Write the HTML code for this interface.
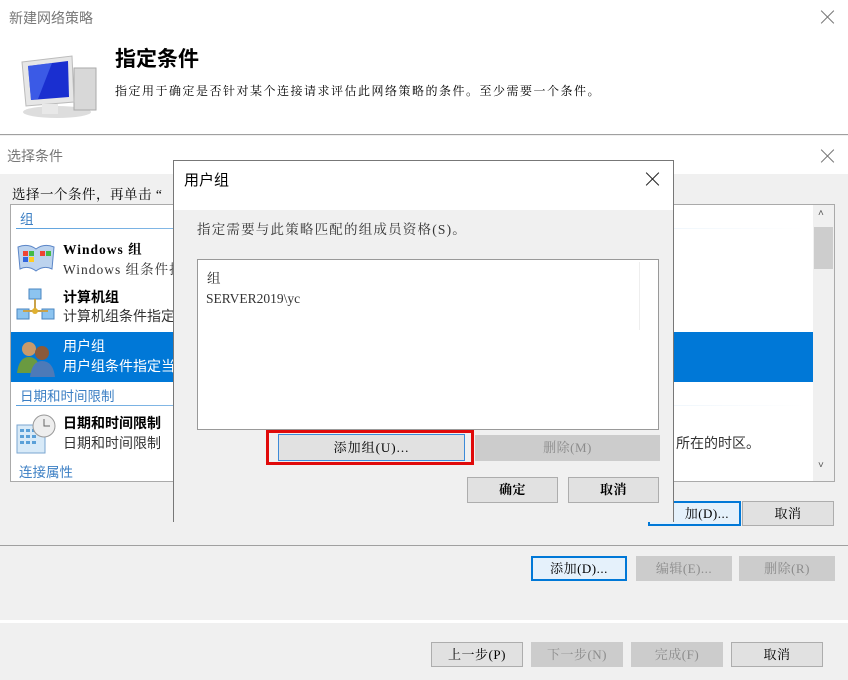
<!DOCTYPE html>
<html><head><meta charset="utf-8"><style>
*{margin:0;padding:0;box-sizing:border-box}
body{width:848px;height:680px;overflow:hidden;background:#f0f0f0;position:relative;font-family:"Liberation Sans","Noto Sans CJK SC",sans-serif;font-size:13px;color:#000}
.a{position:absolute}
.s{font-family:"Liberation Serif","Noto Serif CJK SC",serif}
.btn{position:absolute;background:#e1e1e1;border:1px solid #adadad;text-align:center;font-family:"Liberation Serif","Noto Serif CJK SC",serif;font-size:13px;color:#000;letter-spacing:.5px}
.dis{background:#cccccc;border-color:#cccccc;color:#8c8c8c}
.def{border:2px solid #0078d7;background:#e5f1fb}
.x{position:absolute;width:14px;height:14px}
.x:before,.x:after{content:"";position:absolute;left:6px;top:-2px;width:1px;height:18px;background:#777;transform:rotate(45deg)}
.x:after{transform:rotate(-45deg)}
.x.d:before,.x.d:after{background:#222}
</style></head><body>
<div class="a" style="left:0;top:0;width:848px;height:135px;background:#fff;border-bottom:1px solid #a0a0a0"></div>
<div class="a" style="left:9px;top:8px;font-size:14px;color:#777">新建网络策略</div>
<div class="x" style="left:821px;top:10px"></div>
<div class="a" style="left:115px;top:43px;font-size:21px;font-weight:bold">指定条件</div>
<div class="a s" style="left:115px;top:82px;font-size:12px;letter-spacing:1.5px">指定用于确定是否针对某个连接请求评估此网络策略的条件。至少需要一个条件。</div>
<svg class="a" style="left:12px;top:50px" width="86" height="70">
<ellipse cx="45" cy="62" rx="34" ry="6" fill="#ddd"/>
<rect x="62" y="18" width="22" height="42" fill="#d8d8d8" stroke="#aaa"/>
<path d="M10 12 L60 6 L62 52 L14 56 Z" fill="#e6e6e6" stroke="#bbb"/>
<path d="M16 16 L56 11 L57 47 L19 50 Z" fill="#1a2fd0"/>
<path d="M16 16 L40 13 L26 49 L19 50 Z" fill="#4a6cf0" opacity=".7"/>
<rect x="30" y="54" width="16" height="10" fill="#e8e8e8"/>
</svg>
<div class="a" style="left:0;top:136px;width:848px;height:38px;background:#fff"></div>
<div class="a" style="left:7px;top:146px;font-size:14px;color:#777">选择条件</div>
<div class="x" style="left:821px;top:149px"></div>
<div class="a s" style="left:12px;top:183px;font-size:13.5px;letter-spacing:.5px">选择一个条件，再单击 “</div>
<div class="a" style="left:10px;top:204px;width:825px;height:278px;background:#fff;border:1px solid #aaa"></div>
<div class="a" style="left:813px;top:205px;width:21px;height:276px;background:#f0f0f0"></div>
<div class="a" style="left:814px;top:227px;width:19px;height:42px;background:#cdcdcd"></div>
<div class="a" style="left:818px;top:208px;font-size:10px;color:#555">&#x2C4;</div>
<div class="a" style="left:818px;top:460px;font-size:10px;color:#555">&#x2C5;</div>
<div class="a" style="left:20px;top:208px;font-size:13.5px;color:#3c7fc4">组</div>
<div class="a" style="left:16px;top:228px;width:790px;height:1px;background:linear-gradient(90deg,#5aa0dd,#dbeaf7 60%,#fff)"></div>
<svg class="a" style="left:16px;top:241px" width="40" height="34"><path d="M2 6 Q12 2 20 8 Q28 2 38 6 L36 28 Q28 24 20 30 Q12 24 4 28Z" fill="#bcd3ee" stroke="#5b86c8"/><rect x="7" y="10" width="5" height="5" fill="#e43"/><rect x="13" y="10" width="5" height="5" fill="#4b4"/><rect x="7" y="16" width="5" height="5" fill="#36d"/><rect x="13" y="16" width="5" height="5" fill="#fc2"/><rect x="24" y="10" width="5" height="5" fill="#e43"/><rect x="30" y="10" width="5" height="5" fill="#4b4"/></svg>
<div class="a s" style="left:63px;top:238px;font-weight:bold;font-size:13.5px;letter-spacing:1px">Windows 组</div>
<div class="a s" style="left:63px;top:258px;font-size:13.5px;color:#333;letter-spacing:1px">Windows 组条件指</div>
<svg class="a" style="left:15px;top:287px" width="42" height="42"><rect x="14" y="2" width="12" height="10" fill="#8cc4f0" stroke="#4a86c0"/><rect x="2" y="22" width="12" height="10" fill="#8cc4f0" stroke="#4a86c0"/><rect x="27" y="22" width="12" height="10" fill="#8cc4f0" stroke="#4a86c0"/><path d="M20 12V24M8 24H33" stroke="#c9a24a" stroke-width="2"/><circle cx="20" cy="24" r="3" fill="#e0b030"/></svg>
<div class="a" style="left:63px;top:287px;font-weight:bold;font-size:14px">计算机组</div>
<div class="a" style="left:63px;top:306px;font-size:14px;color:#333">计算机组条件指定</div>
<div class="a" style="left:11px;top:332px;width:802px;height:50px;background:#0078d7"></div>
<svg class="a" style="left:15px;top:337px" width="42" height="40"><circle cx="14" cy="12" r="7" fill="#c89a6a"/><path d="M2 36 Q4 20 14 20 Q24 20 26 36Z" fill="#6a9a40"/><circle cx="27" cy="16" r="7" fill="#8a5a3a"/><path d="M15 40 Q17 24 27 24 Q38 24 40 40Z" fill="#4d7ab8"/></svg>
<div class="a" style="left:63px;top:336px;font-size:14px;color:#fff">用户组</div>
<div class="a" style="left:63px;top:356px;font-size:14px;color:#fff">用户组条件指定当</div>
<div class="a" style="left:20px;top:385px;font-size:13.5px;color:#3c7fc4">日期和时间限制</div>
<div class="a" style="left:16px;top:405px;width:790px;height:1px;background:linear-gradient(90deg,#5aa0dd,#dbeaf7 60%,#fff)"></div>
<svg class="a" style="left:15px;top:413px" width="42" height="42"><rect x="2" y="12" width="28" height="28" fill="#d8eaf8" stroke="#7aa6d0"/><g fill="#5aa0d8"><rect x="5" y="16" width="4" height="3"/><rect x="11" y="16" width="4" height="3"/><rect x="17" y="16" width="4" height="3"/><rect x="5" y="22" width="4" height="3"/><rect x="11" y="22" width="4" height="3"/><rect x="17" y="22" width="4" height="3"/><rect x="5" y="28" width="4" height="3"/><rect x="11" y="28" width="4" height="3"/><rect x="17" y="28" width="4" height="3"/></g><circle cx="29" cy="13" r="11" fill="#eee" stroke="#999"/><path d="M29 6V13H35" stroke="#666" fill="none"/></svg>
<div class="a" style="left:63px;top:413px;font-weight:bold;font-size:14px">日期和时间限制</div>
<div class="a" style="left:63px;top:433px;font-size:14px;color:#333">日期和时间限制</div>
<div class="a" style="left:676px;top:433px;font-size:14px;color:#333">所在的时区。</div>
<div class="a" style="left:19px;top:461px;font-size:13.5px;color:#3c7fc4">连接属性</div>
<div class="btn def" style="left:648px;top:501px;width:93px;height:25px;line-height:21px;text-align:right;padding-right:10px">加(D)...</div>
<div class="btn" style="left:742px;top:501px;width:92px;height:25px;line-height:23px">取消</div>
<div class="a" style="left:0;top:545px;width:848px;height:1px;background:#a0a0a0"></div>
<div class="btn def" style="left:531px;top:556px;width:96px;height:25px;line-height:21px">添加(D)...</div>
<div class="btn dis" style="left:636px;top:556px;width:96px;height:25px;line-height:23px">编辑(E)...</div>
<div class="btn dis" style="left:739px;top:556px;width:96px;height:25px;line-height:23px">删除(R)</div>
<div class="a" style="left:0;top:620px;width:848px;height:3px;background:#fff"></div>
<div class="btn" style="left:431px;top:642px;width:92px;height:25px;line-height:23px">上一步(P)</div>
<div class="btn dis" style="left:531px;top:642px;width:92px;height:25px;line-height:23px">下一步(N)</div>
<div class="btn dis" style="left:631px;top:642px;width:92px;height:25px;line-height:23px">完成(F)</div>
<div class="btn" style="left:731px;top:642px;width:92px;height:25px;line-height:23px">取消</div>
<div class="a" style="left:173px;top:160px;width:501px;height:362px;background:#f0f0f0;border:1px solid #777;border-bottom:none"></div>
<div class="a" style="left:174px;top:161px;width:499px;height:49px;background:#fff"></div>
<div class="a" style="left:184px;top:169px;font-size:15px">用户组</div>
<div class="x d" style="left:646px;top:172px"></div>
<div class="a s" style="left:197px;top:218px;font-size:13.5px;color:#333;letter-spacing:1.2px">指定需要与此策略匹配的组成员资格(S)。</div>
<div class="a" style="left:197px;top:259px;width:462px;height:171px;background:#fff;border:1px solid #999"></div>
<div class="a" style="left:639px;top:262px;width:1px;height:68px;background:#eee"></div>
<div class="a s" style="left:207px;top:267px;font-size:13.5px;color:#333">组</div>
<div class="a s" style="left:206px;top:291px;font-size:13.5px;color:#333">SERVER2019\yc</div>
<div class="a" style="left:266px;top:430px;width:208px;height:35px;border:3px solid #e00a0a"></div>
<div class="btn" style="left:278px;top:434px;width:187px;height:27px;line-height:25px;border-color:#3c8ad8;background:#e1e1e1;letter-spacing:1px">添加组(U)...</div>
<div class="btn dis" style="left:475px;top:435px;width:185px;height:26px;line-height:24px">删除(M)</div>
<div class="btn" style="left:467px;top:477px;width:91px;height:26px;line-height:24px;font-weight:bold">确定</div>
<div class="btn" style="left:568px;top:477px;width:91px;height:26px;line-height:24px;font-weight:bold">取消</div>
</body></html>
